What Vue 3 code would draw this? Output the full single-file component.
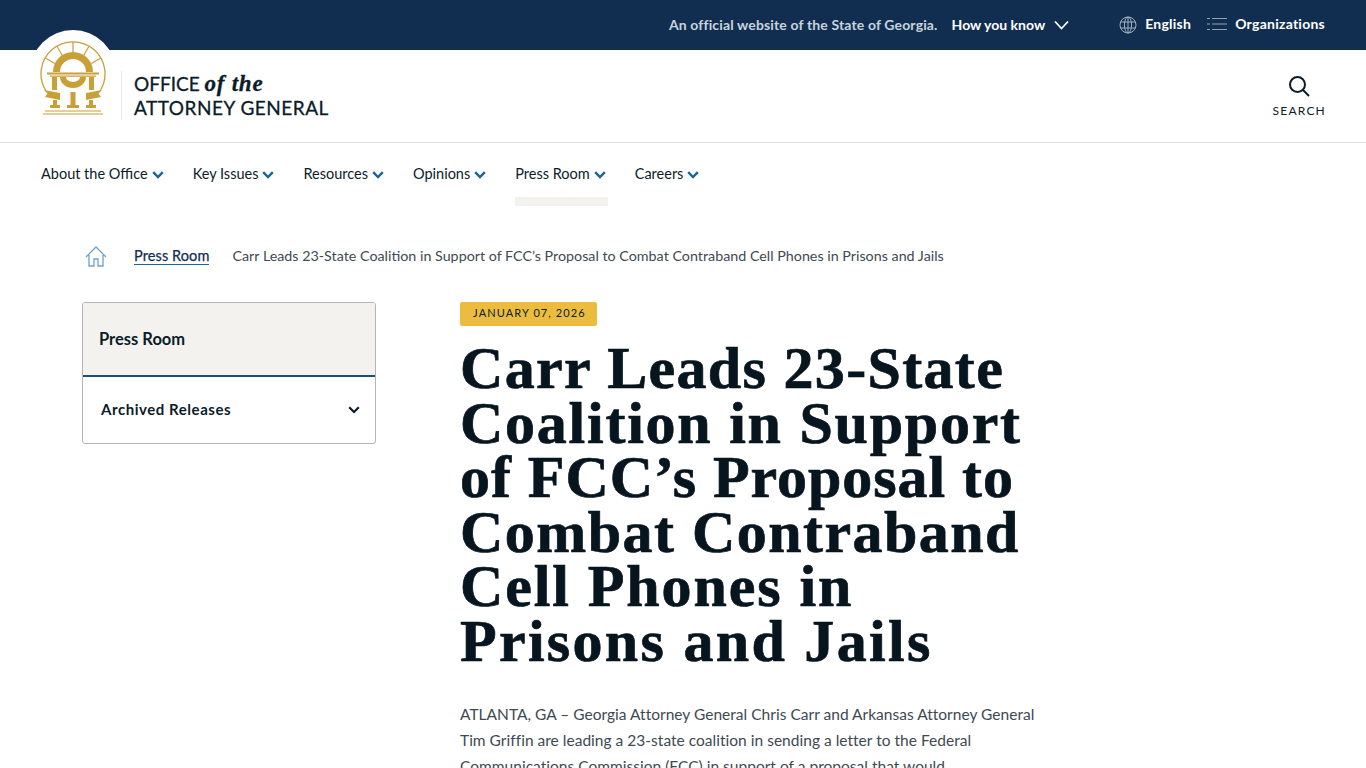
<script setup>
const navItems = ['About the Office', 'Key Issues', 'Resources', 'Opinions', 'Press Room', 'Careers']
const title = ['Carr Leads 23-State', 'Coalition in Support', 'of FCC’s Proposal to', 'Combat Contraband', 'Cell Phones in', 'Prisons and Jails']
</script>

<template>
  <div class="page">
    <div class="topbar">
      <span class="official">An official website of the State of Georgia.</span>
      <span class="know">How you know</span>
      <svg class="know-chev" width="15" height="10" viewBox="0 0 15 10"><path d="M1 1.5 7.5 8.5 14 1.5" fill="none" stroke="#fff" stroke-width="1.8"/></svg>
      <svg class="globe" width="18" height="18" viewBox="0 0 18 18" fill="none" stroke="#9fb0c2" stroke-width="1">
        <circle cx="9" cy="9" r="8"/><ellipse cx="9" cy="9" rx="3.6" ry="8"/><path d="M9 1v16M1.6 6h14.8M1.6 12h14.8"/>
      </svg>
      <span class="tool">English</span>
      <svg class="list" width="20" height="14" viewBox="0 0 20 14" fill="none" stroke="#8fa2b6" stroke-width="1">
        <path d="M0 1.5h3M5 1.5h15M0 7h3M5 7h15M0 12.5h3M5 12.5h15"/>
      </svg>
      <span class="tool">Organizations</span>
    </div>

    <header class="header">
      <div class="seal">
        <svg width="68" height="76" viewBox="0 0 68 76" fill="none">
          <path d="M7 51A32 32 0 1 1 61 51" stroke="#c99f38" stroke-width="1.3"/>
          <path d="M34 2V13M44.5 15.8 50 6.3M23.5 15.8 18 6.3M52.2 23.5 61.7 18M15.8 23.5 6.3 18" stroke="#c99f38" stroke-width="1.2"/>
          <path d="M14 32A20 20 0 0 1 54 32H47A13 13 0 0 0 21 32Z" fill="#c99f38"/>
          <path d="M8 32.5h52v2H8zM11 35.5h46v1.2H11z" fill="#c99f38"/>
          <path d="M21 37A13 11 0 0 0 47 37H41A7 5 0 0 1 27 37Z" fill="#c99f38"/>
          <path d="M13 37h5v13h-5zM50 37h5v13h-5z" fill="#c99f38"/>
          <path d="M5 50 21 53V60L6 57 8.500 53.500ZM63 50 47 53V60L62 57 59.500 53.500Z" fill="#c99f38"/>
          <path d="M31.500 52h5v14h-5zM14 60h4v5h-4zM50 60h4v5h-4z" fill="#c99f38"/>
          <path d="M11 65h10v3H11zM28 65h12v3H28zM47 65h10v3H47z" fill="#c99f38"/>
          <path d="M6 71h56M4 74h60" stroke="#c99f38" stroke-width="1.2"/>
        </svg>
      </div>
      <div class="brand">
        <div><span class="office">OFFICE </span><em>of the</em></div>
        <div>ATTORNEY GENERAL</div>
      </div>
      <div class="search">
        <svg width="22" height="22" viewBox="0 0 22 22" fill="none" stroke="#0b1c2a" stroke-width="2">
          <circle cx="9.5" cy="9.5" r="7.500"/><path d="M15 15l6 6"/>
        </svg>
        <span>SEARCH</span>
      </div>
    </header>

    <nav class="nav">
      <div v-for="n in navItems" :key="n" class="nav-item" :class="{ active: n === 'Press Room' }">
        <span>{{ n }}</span>
        <svg width="12" height="8" viewBox="0 0 12 8"><path d="M1.2 1.2 6 6l4.8-4.8" fill="none" stroke="#1a6492" stroke-width="2.4"/></svg>
      </div>
    </nav>

    <div class="crumbs">
      <svg width="22" height="21" viewBox="0 0 22 21" fill="none" stroke="#6fa3c4" stroke-width="1.3">
        <path d="M1 11 11 1l10 10M4 9v11h5v-7h4v7h5V9"/>
      </svg>
      <a class="crumb-link">Press Room</a>
      <span class="crumb-current">Carr Leads 23-State Coalition in Support of FCC’s Proposal to Combat Contraband Cell Phones in Prisons and Jails</span>
    </div>

    <div class="content">
      <aside class="side">
        <div class="side-head">Press Room</div>
        <div class="side-row">
          <span class="side-label">Archived Releases</span>
          <svg width="12" height="8" viewBox="0 0 12 8"><path d="M1.2 1.2 6 6l4.8-4.8" fill="none" stroke="#0b1c2a" stroke-width="2.2"/></svg>
        </div>
      </aside>
      <main class="main">
        <div class="badge">JANUARY 07, 2026</div>
        <h1 class="title"><span v-for="l in title" :key="l">{{ l }}</span></h1>
        <p class="body">ATLANTA, GA – Georgia Attorney General Chris Carr and Arkansas Attorney General Tim Griffin are leading a 23-state coalition in sending a letter to the Federal Communications Commission (FCC) in support of a proposal that would</p>
      </main>
    </div>
  </div>
</template>

<style>
html, body { margin: 0; background: #fff; overflow: hidden; height: 768px; }
</style>

<style scoped>
.page { width: 1366px; height: 768px; overflow: hidden; font-family: Lato, "Noto Sans", sans-serif; color: #0b1c2a; position: relative; }
.topbar { height: 50px; background: #112e51; display: flex; align-items: center; justify-content: flex-end; padding: 0 41px 2px 0; box-sizing: border-box; color: #fff; font-size: 14px; font-weight: 700; }
.official { color: #c8d3de; margin-right: 14px; letter-spacing: .14px; }
.know { margin-right: 9px; }
.know-chev { margin: 2px 50px 0 0; }
.globe { margin: 2px 8px 0 0; }
.tool { margin-top: -1px; letter-spacing: .25px; }
.list { margin: 0 8px 0 16px; }
.header { height: 93px; border-bottom: 1px solid #e3e3e3; box-sizing: border-box; display: flex; align-items: flex-start; padding: 21px 41px 0 121px; position: relative; }
.seal { position: absolute; left: 30px; top: -20px; width: 86px; height: 86px; border-radius: 50%; background: #fff; display: flex; justify-content: center; padding-top: 10px; box-sizing: border-box; }
.brand { border-left: 1px solid #e8e8e8; padding-left: 12px; font-size: 19px; line-height: 24px; height: 48px; letter-spacing: .5px; -webkit-text-stroke: .3px #0b1c2a; padding-top: 1px; box-sizing: border-box; }
.office { letter-spacing: 0; }
.brand em { font-family: "Liberation Serif", serif; font-weight: 700; font-size: 23px; letter-spacing: .75px; }
.search { margin-left: auto; margin-right: -1px; display: flex; flex-direction: column; align-items: center; gap: 6px; font-size: 12px; letter-spacing: 1.2px; padding-top: 4px; }
.nav { display: flex; gap: 27px; padding-left: 41px; height: 63px; }
.nav-item { display: flex; align-items: flex-start; gap: 4px; font-size: 14.5px; padding: 22px 2px 0 0; height: 63px; box-sizing: border-box; line-height: 18px; }
.nav-item svg { margin-top: 6px; }
.nav-item.active { box-shadow: inset 0 -9px 0 #f4f2ed; }
.crumbs { display: flex; align-items: center; padding-left: 85px; margin-top: 38px; height: 24px; font-size: 14.3px; }
.crumb-link { margin-left: 27px; border-bottom: 1px solid #1a6492; line-height: 17px; color: #112e51; letter-spacing: .1px; -webkit-text-stroke: .25px #112e51; font-size: 14.5px; }
.crumb-current { margin: 0 0 2px 23px; color: #3e4954; }
.content { display: flex; padding-left: 82px; margin-top: 34px; }
.side { width: 294px; height: 142px; box-sizing: border-box; border: 1px solid #b5b5b5; border-radius: 3px; overflow: hidden; margin-right: 84px; flex: none; }
.side-head { height: 72px; background: #f4f2ee; border-bottom: 2px solid #1a5076; display: flex; align-items: center; padding-left: 16px; font-size: 16.5px; font-weight: 700; }
.side-row { display: flex; align-items: center; justify-content: space-between; padding: 0 15px 0 18px; height: 66px; font-size: 15px; font-weight: 700; letter-spacing: .55px; }
.side-label { margin-bottom: 2px; }
.main { width: 590px; }
.badge { width: fit-content; background: #ecbc3f; border-radius: 2px; padding: 0 11px 0 13px; height: 24px; line-height: 22px; font-size: 11px; letter-spacing: 1.1px; }
.title { margin: 15px 0 0; font-family: "Liberation Serif", serif; font-weight: 700; font-size: 60px; line-height: 54.6px; color: #07151f; -webkit-text-stroke: .7px #07151f; }
.title span { display: block; white-space: nowrap; }
.title span:nth-child(1) { letter-spacing: 1.33px; }
.title span:nth-child(2) { letter-spacing: 1.75px; }
.title span:nth-child(3) { letter-spacing: .95px; }
.title span:nth-child(4) { letter-spacing: 1.46px; }
.title span:nth-child(5) { letter-spacing: 1.9px; }
.title span:nth-child(6) { letter-spacing: 2.3px; }
.body { margin: 32px 0 0; font-size: 15.5px; line-height: 26px; color: #3e4954; width: 580px; letter-spacing: .02px; }
</style>
